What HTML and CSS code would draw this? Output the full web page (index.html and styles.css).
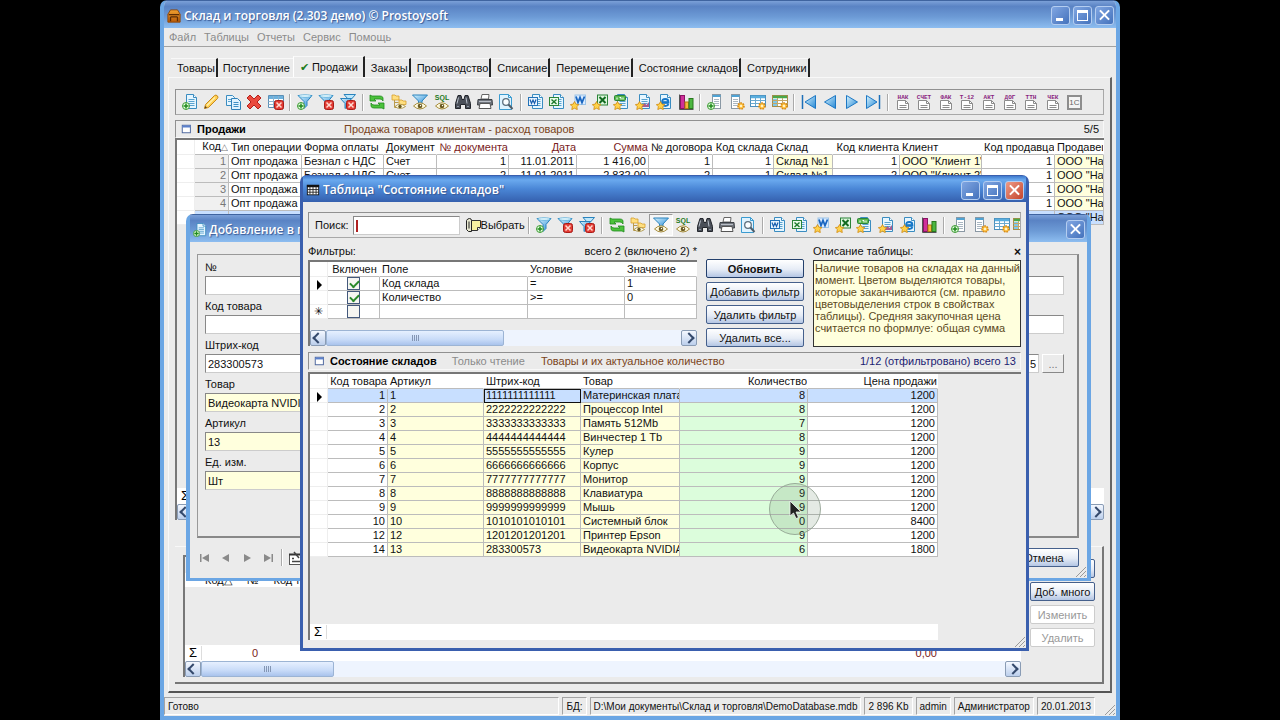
FILE: index.html
```html
<!DOCTYPE html>
<html lang="ru">
<head>
    <meta charset="UTF-8">
    <title>Склад и торговля</title>
    <link rel="stylesheet" href="styles.css">
</head>
<body>
    <!-- Icon set -->
    <svg class="sprite" aria-hidden="true">
        <defs>
            <linearGradient id="g-blue" x1="0" y1="0" x2="1" y2="1">
                <stop offset="0" stop-color="#d8f4ff"/>
                <stop offset="1" stop-color="#2487d4"/>
            </linearGradient>
            <linearGradient id="g-box" x1="0" y1="0" x2="0" y2="1">
                <stop offset="0" stop-color="#f0a030"/>
                <stop offset="1" stop-color="#b85a08"/>
            </linearGradient>
        </defs>
        <symbol id="p-page" viewBox="0 0 16 16">
            <path d="M4.500 .5h7l3 3v11h-10z" fill="#e6f6ff" stroke="#3a8cc0"/>
            <path d="M11.500 .5v3h3" fill="#fff" stroke="#3a8cc0"/>
            <path d="M6.500 5.500h6M6.500 7.500h6M6.500 9.500h6M6.500 11.500h6" stroke="#5ba3cf"/>
        </symbol>
        <symbol id="p-plus" viewBox="0 0 16 16">
            <circle cx="4" cy="12" r="3.500" fill="#e9ffe4" stroke="#3a9a30"/>
            <path d="M4 9.500v5M1.500 12h5" stroke="#1f8a1c" stroke-width="1.500"/>
        </symbol>
        <symbol id="p-cross" viewBox="0 0 16 16">
            <rect x="6.500" y="6.500" width="9" height="9" rx="2" fill="#e23c34" stroke="#a81c18"/>
            <path d="M8.500 8.500l5 5M13.500 8.500l-5 5" stroke="#ffd8d0" stroke-width="1.500"/>
        </symbol>
        <symbol id="p-star" viewBox="0 0 16 16">
            <path d="M4.500 7.500l1.400 2.600 3 .5-2.100 2 .5 3-2.800-1.400-2.700 1.400.5-3-2-2 2.900-.5z" fill="#ffd24a" stroke="#d08a10" stroke-width=".8"/>
        </symbol>
        <symbol id="p-gear" viewBox="0 0 16 16">
            <circle cx="12" cy="12" r="3" fill="#ffc240" stroke="#d68a18" stroke-width="1.600" stroke-dasharray="1.600 1"/>
            <circle cx="12" cy="12" r="1.200" fill="#fff3cc"/>
        </symbol>
        <symbol id="p-funnel" viewBox="0 0 16 16">
            <path d="M1 1.500h14l-5 6v4l-3 3v-7z" fill="url(#g-blue)" stroke="#2a83bd"/>
            <ellipse cx="8" cy="2" rx="6.500" ry="1.300" fill="#e8fbff" stroke="#4aa5d6" stroke-width=".7"/>
        </symbol>
        <symbol id="p-eye" viewBox="0 0 16 16">
            <path d="M1.500 12q6.500-6.500 13 0q-6.500 6-13 0z" fill="#fffbe0" stroke="#a58b3c"/>
            <circle cx="8" cy="12" r="2.300" fill="#6b5a20"/>
            <circle cx="8.500" cy="11.500" r=".7" fill="#fff"/>
        </symbol>
        <symbol id="i-add" viewBox="0 0 16 16"><use href="#p-page"/><use href="#p-plus"/></symbol>
        <symbol id="i-edit" viewBox="0 0 16 16">
            <path d="M1.500 14.500l1-4 9-9q1.500-1 2.800.3t.2 2.700l-9 9z" fill="#ffcf52" stroke="#c88a1c"/>
            <path d="M4 11.500l8-8" stroke="#fff0ae" stroke-width="1.500"/>
            <path d="M1.500 14.500l.7-2.500 1.800 1.800z" fill="#5b4320"/>
        </symbol>
        <symbol id="i-copy" viewBox="0 0 16 16">
            <path d="M1.500 1.500h6l2 2v8h-8z" fill="#e6f6ff" stroke="#3a8cc0"/>
            <path d="M3 5.500h4M3 7.500h3" stroke="#5ba3cf"/>
            <path d="M6.500 4.500h6l3 3v8h-9z" fill="#dff3ff" stroke="#2f80b8"/>
            <path d="M8.500 8.500h5M8.500 10.500h5M8.500 12.500h5" stroke="#3e90c6"/>
        </symbol>
        <symbol id="i-delete" viewBox="0 0 16 16">
            <path d="M4 1l4 4 4-4 3 3-4 4 4 4-3 3-4-4-4 4-3-3 4-4-4-4z" fill="#ea4a3e" stroke="#b5201a"/>
        </symbol>
        <symbol id="i-tabledel" viewBox="0 0 16 16">
            <path d="M.5 1.500h15v12h-15z" fill="#fff" stroke="#5b8fb5"/>
            <path d="M1 2h14v3H1z" fill="#6eb2de"/>
            <path d="M.5 7.500h15M.5 10.500h15M5.500 2v11M10.500 2v11" stroke="#8db3cf"/>
            <use href="#p-cross"/>
        </symbol>
        <symbol id="i-filteradd" viewBox="0 0 16 16"><use href="#p-funnel"/><use href="#p-plus"/></symbol>
        <symbol id="i-filterdel" viewBox="0 0 16 16"><use href="#p-funnel"/><use href="#p-cross"/></symbol>
        <symbol id="i-filterclear" viewBox="0 0 16 16">
            <path d="M4 .5h11.500l-4 4.500H8z" fill="#bfe8fb" stroke="#2a83bd"/>
            <path d="M.5 4.500h11l-4 5v3l-2.500 2v-5z" fill="url(#g-blue)" stroke="#2a83bd"/>
            <use href="#p-cross"/>
        </symbol>
        <symbol id="i-refresh" viewBox="0 0 16 16">
            <path d="M1 1v6h6L5 5h6q2 0 3 2V3.500Q13 2 11 2H3z" fill="#4cc23c" stroke="#1f8a1c" stroke-width=".8"/>
            <path d="M15 15V9H9l2 2H5q-2 0-3-2v3.500Q3 14 5 14h8z" fill="#4cc23c" stroke="#1f8a1c" stroke-width=".8"/>
        </symbol>
        <symbol id="i-tree" viewBox="0 0 16 16">
            <path d="M3.500 5v8.500h4M3.500 8.500h4" fill="none" stroke="#b99a4c"/>
            <path d="M1 1h3l1 1h3v4H1zM8 6h3l1 1h3v3.500H8z" fill="#ffdf80" stroke="#d6a02c" stroke-width=".8"/>
            <path d="M4 12.500q5-4.500 10.500 0q-5.500 4-10.500 0z" fill="#fffbe0" stroke="#a58b3c" stroke-width=".8"/>
            <circle cx="9" cy="12.500" r="1.700" fill="#6b5a20"/>
        </symbol>
        <symbol id="i-filtereye" viewBox="0 0 16 16">
            <path d="M.5 1h15l-5.500 6v3H6.500V7z" fill="url(#g-blue)" stroke="#2a83bd"/>
            <use href="#p-eye"/>
        </symbol>
        <symbol id="i-sql" viewBox="0 0 16 16">
            <use href="#p-eye"/>
            <text x="8" y="6" text-anchor="middle" class="sql-text">SQL</text>
        </symbol>
        <symbol id="i-find" viewBox="0 0 16 16">
            <path d="M3 1.500h3l1 4h2l1-4h3l2.500 8v5h-5v-4h-5v4h-5v-5z" fill="#4a4f58" stroke="#23262c"/>
            <path d="M3.500 3.500l-1.500 6M11 3.500l1 6" stroke="#b8bfca"/>
            <path d="M2 12.500h2M12 12.500h2" stroke="#8d96a3"/>
        </symbol>
        <symbol id="i-print" viewBox="0 0 16 16">
            <path d="M4 5l1-4.500h7L11.500 5z" fill="#fff" stroke="#666"/>
            <path d="M1 5.500h14l.5 5.500h-15z" fill="#70757d" stroke="#3c4046"/>
            <path d="M3 9.500h10l1 5H2z" fill="#fdfdfd" stroke="#555"/>
            <path d="M2 7.500h12" stroke="#b9bec6"/>
        </symbol>
        <symbol id="i-preview" viewBox="0 0 16 16">
            <path d="M1.500 .5h9l3 3v12h-12z" fill="#dff3ff" stroke="#3a9bd0"/>
            <path d="M10.500 .5v3h3" fill="none" stroke="#3a9bd0"/>
            <circle cx="8" cy="8" r="3.300" fill="#fafdff" stroke="#5c6f7e" stroke-width="1.300"/>
            <path d="M10.500 10.500l4 4.500" stroke="#4f5d69" stroke-width="2"/>
        </symbol>
        <symbol id="i-word" viewBox="0 0 16 16">
            <use href="#p-page"/>
            <rect x=".5" y="3.500" width="9" height="8" fill="#e8f4ff" stroke="#2272b8"/>
            <path d="M2 5.500l1.500 4 1.500-3.500 1.500 3.500L8 5.500" fill="none" stroke="#1a5fae" stroke-width="1.200"/>
        </symbol>
        <symbol id="i-excel" viewBox="0 0 16 16">
            <use href="#p-page"/>
            <rect x=".5" y="3.500" width="9" height="8" fill="#e8fbe8" stroke="#2b8438"/>
            <path d="M2.500 5.500l5 4.500M7.500 5.500l-5 4.500" stroke="#1d7a2c" stroke-width="1.400"/>
        </symbol>
        <symbol id="i-wordstar" viewBox="0 0 16 16">
            <rect x="5" y="1" width="10.500" height="9.500" fill="#d9ebff" stroke="#9cc4e8"/>
            <path d="M6 2.500l2 6 2-5 2 5 2.500-6" fill="none" stroke="#1a66c0" stroke-width="1.800"/>
            <use href="#p-star"/>
        </symbol>
        <symbol id="i-excelstar" viewBox="0 0 16 16">
            <rect x="5.500" y="1" width="10" height="10" fill="#dff7df" stroke="#2b8438"/>
            <path d="M7.500 3l6 6M13.500 3l-6 6" stroke="#126a20" stroke-width="2"/>
            <use href="#p-star"/>
        </symbol>
        <symbol id="i-csvstar" viewBox="0 0 16 16">
            <use href="#p-page"/>
            <rect x="1.500" y="1.500" width="11" height="5" rx="1" fill="#58b84c" stroke="#2b8438"/>
            <path d="M4 3.500v2M6.500 3.500h1.500v2M10 3.500v2" stroke="#fff" fill="none"/>
            <use href="#p-star"/>
        </symbol>
        <symbol id="i-imgstar" viewBox="0 0 16 16">
            <use href="#p-page"/>
            <path d="M7 12l2.500-3 2 2 2.500-3v5H7z" fill="#a85c90"/>
            <use href="#p-star"/>
        </symbol>
        <symbol id="i-iestar" viewBox="0 0 16 16">
            <use href="#p-page"/>
            <path d="M12.500 10q-1 2-3.200 2Q6 12 6 8.500T9.300 5q3.200 0 3.200 3.500H6" fill="none" stroke="#1677c8" stroke-width="1.800"/>
            <use href="#p-star"/>
        </symbol>
        <symbol id="i-chart" viewBox="0 0 16 16">
            <path d="M1.500 .5v15h14" fill="none" stroke="#555"/>
            <rect x="2.500" y="1.500" width="4" height="13" fill="#d0309a" stroke="#8a1464"/>
            <rect x="7" y="8" width="3.500" height="6.500" fill="#f5b83a" stroke="#b67a10"/>
            <rect x="11" y="4.500" width="4" height="10" fill="#4cb640" stroke="#28781e"/>
        </symbol>
        <symbol id="p-column" viewBox="0 0 16 16">
            <rect x="5.500" y=".5" width="8" height="14" fill="#fff" stroke="#8a98a4"/>
            <path d="M5.500 2h8" stroke="#4fa3d4" stroke-width="2"/>
            <path d="M7 5.500h5M7 7.500h5M7 9.500h5M7 11.500h5" stroke="#a9b7c2"/>
        </symbol>
        <symbol id="i-coladd" viewBox="0 0 16 16"><use href="#p-column"/><use href="#p-plus"/></symbol>
        <symbol id="i-colset" viewBox="0 0 16 16"><use href="#p-column" x="-3"/><use href="#p-gear"/></symbol>
        <symbol id="i-gridset" viewBox="0 0 16 16">
            <rect x=".5" y="1.500" width="15" height="11" fill="#fff" stroke="#4b8fbd"/>
            <path d="M1 3h14" stroke="#5aaede" stroke-width="2.500"/>
            <path d="M.5 6.500h15M.5 9.500h15M5.500 4v8M10.500 4v8" stroke="#6ba9cf"/>
            <use href="#p-gear"/>
        </symbol>
        <symbol id="i-gridcol" viewBox="0 0 16 16">
            <rect x=".5" y="1.500" width="15" height="11" fill="#fff" stroke="#a88c48"/>
            <path d="M1 3h14" stroke="#4aa84a" stroke-width="2.500"/>
            <path d="M1 5h4v7H1z" fill="#7fc8ea"/>
            <path d="M.5 6.500h15M.5 9.500h15M5.500 4v8M10.500 4v8" stroke="#c4a868"/>
            <use href="#p-gear"/>
        </symbol>
        <symbol id="i-first" viewBox="0 0 16 16"><path d="M1.500 1v14" stroke="#1d6fb8" stroke-width="1.500"/><path d="M14.500 1.500v13L4 8z" fill="url(#g-blue)" stroke="#1d78c4"/></symbol>
        <symbol id="i-prev" viewBox="0 0 16 16"><path d="M13.500 1.500v13L2.500 8z" fill="url(#g-blue)" stroke="#1d78c4"/></symbol>
        <symbol id="i-next" viewBox="0 0 16 16"><path d="M2.500 1.500v13L13.500 8z" fill="url(#g-blue)" stroke="#1d78c4"/></symbol>
        <symbol id="i-last" viewBox="0 0 16 16"><path d="M14.500 1v14" stroke="#1d6fb8" stroke-width="1.500"/><path d="M1.500 1.500v13L12 8z" fill="url(#g-blue)" stroke="#1d78c4"/></symbol>
        <symbol id="p-form" viewBox="0 0 16 16">
            <path d="M2.500 6.500h8l3 3v6h-11z" fill="#fff" stroke="#8b8b8b"/>
            <path d="M10.500 6.500v3h3M4.500 11.500h7M4.500 13.500h7" fill="none" stroke="#8b8b8b"/>
        </symbol>
        <symbol id="i-box" viewBox="0 0 16 16">
            <path d="M1 6l3-5h8l3 5v9H1z" fill="url(#g-box)" stroke="#8c4406"/>
            <path d="M2 6.500h12M4 9h8M4 9v5M12 9v5" stroke="#5c2c04" stroke-width="1.500"/>
        </symbol>
        <symbol id="i-sheet" viewBox="0 0 16 16">
            <rect x="1.500" y="2.500" width="13" height="11" fill="#fff" stroke="#111"/>
            <path d="M1 3.500h14" stroke="#111" stroke-width="2.500"/>
            <path d="M1.500 7.500h13M1.500 10.500h13M4.500 4v9M8 4v9M11.500 4v9" stroke="#222"/>
        </symbol>
        <symbol id="i-form" viewBox="0 0 16 16">
            <rect x="2" y="2" width="13" height="12" fill="#fff" stroke="#49639c" stroke-width="1.500"/>
            <path d="M2 4h13" stroke="#5a80cc" stroke-width="3"/>
        </symbol>
        <symbol id="i-choose" viewBox="0 0 16 16">
            <path d="M5.500 3.500h10v7l-3 3h-7z" fill="#f7f0a0" stroke="#333"/>
            <path d="M12.500 13.500v-3h3" fill="#fff" stroke="#333"/>
            <path d="M1.500 3.500v9l2 2h3v-11q0-2-2-2t-3 2zM4 4.500v7" fill="#e9e9d0" stroke="#222"/>
        </symbol>
        <symbol id="i-props" viewBox="0 0 16 16">
            <rect x="1.500" y="4.500" width="13" height="10" fill="#fff" stroke="#555"/>
            <path d="M1 4.500h14" stroke="#333" stroke-width="2"/>
            <path d="M6 2l5 6M4 8.500h2M4 11.500h8" stroke="#444" stroke-width="1.500"/>
        </symbol>
        <symbol id="i-grip" viewBox="0 0 12 12">
            <path d="M1 11L11 1M5 11l6-6M9 11l2-2" stroke="#9a9a9a"/>
        </symbol>
    </svg>

    <div class="window app">
        <header class="titlebar">
            <svg class="icon"><use href="#i-box"/></svg>
            <h1 class="title">Склад и торговля (2.303 демо) © Prostoysoft</h1>
            <button class="winbtn min" aria-label="Свернуть"></button>
            <button class="winbtn max" aria-label="Развернуть"></button>
            <button class="winbtn close" aria-label="Закрыть"></button>
        </header>

        <nav class="menu">
            <button>Файл</button>
            <button>Таблицы</button>
            <button>Отчеты</button>
            <button>Сервис</button>
            <button>Помощь</button>
        </nav>

        <div class="workspace">
            <div class="tabs">
                <button class="tab">Товары</button>
                <button class="tab">Поступление</button>
                <button class="tab active"><span class="tick">✔</span> Продажи</button>
                <button class="tab">Заказы</button>
                <button class="tab">Производство</button>
                <button class="tab">Списание</button>
                <button class="tab">Перемещение</button>
                <button class="tab">Состояние складов</button>
                <button class="tab">Сотрудники</button>
            </div>

            <main class="page">
                <div class="toolbar main-tools">
                    <button class="tool" aria-label="Добавить"><svg class="icon"><use href="#i-add"/></svg></button>
                    <button class="tool" aria-label="Изменить"><svg class="icon"><use href="#i-edit"/></svg></button>
                    <button class="tool" aria-label="Копировать"><svg class="icon"><use href="#i-copy"/></svg></button>
                    <button class="tool" aria-label="Удалить"><svg class="icon"><use href="#i-delete"/></svg></button>
                    <button class="tool" aria-label="Очистить"><svg class="icon"><use href="#i-tabledel"/></svg></button>
                    <span class="sep"></span>
                    <button class="tool" aria-label="Добавить фильтр"><svg class="icon"><use href="#i-filteradd"/></svg></button>
                    <button class="tool" aria-label="Удалить фильтр"><svg class="icon"><use href="#i-filterdel"/></svg></button>
                    <button class="tool" aria-label="Удалить все фильтры"><svg class="icon"><use href="#i-filterclear"/></svg></button>
                    <span class="sep"></span>
                    <button class="tool" aria-label="Обновить"><svg class="icon"><use href="#i-refresh"/></svg></button>
                    <button class="tool" aria-label="Дерево"><svg class="icon"><use href="#i-tree"/></svg></button>
                    <button class="tool" aria-label="Фильтры"><svg class="icon"><use href="#i-filtereye"/></svg></button>
                    <button class="tool" aria-label="Запрос"><svg class="icon"><use href="#i-sql"/></svg></button>
                    <button class="tool" aria-label="Найти"><svg class="icon"><use href="#i-find"/></svg></button>
                    <button class="tool" aria-label="Печать"><svg class="icon"><use href="#i-print"/></svg></button>
                    <button class="tool" aria-label="Просмотр"><svg class="icon"><use href="#i-preview"/></svg></button>
                    <span class="sep"></span>
                    <button class="tool" aria-label="Word"><svg class="icon"><use href="#i-word"/></svg></button>
                    <button class="tool" aria-label="Excel"><svg class="icon"><use href="#i-excel"/></svg></button>
                    <button class="tool" aria-label="Шаблон Word"><svg class="icon"><use href="#i-wordstar"/></svg></button>
                    <button class="tool" aria-label="Шаблон Excel"><svg class="icon"><use href="#i-excelstar"/></svg></button>
                    <button class="tool" aria-label="CSV"><svg class="icon"><use href="#i-csvstar"/></svg></button>
                    <button class="tool" aria-label="Текст"><svg class="icon"><use href="#i-imgstar"/></svg></button>
                    <button class="tool" aria-label="HTML"><svg class="icon"><use href="#i-iestar"/></svg></button>
                    <button class="tool" aria-label="Диаграмма"><svg class="icon"><use href="#i-chart"/></svg></button>
                    <span class="sep"></span>
                    <button class="tool" aria-label="Добавить поле"><svg class="icon"><use href="#i-coladd"/></svg></button>
                    <button class="tool" aria-label="Свойства поля"><svg class="icon"><use href="#i-colset"/></svg></button>
                    <button class="tool" aria-label="Свойства таблицы"><svg class="icon"><use href="#i-gridset"/></svg></button>
                    <button class="tool" aria-label="Цвета"><svg class="icon"><use href="#i-gridcol"/></svg></button>
                    <span class="sep"></span>
                    <button class="tool" aria-label="Первая"><svg class="icon"><use href="#i-first"/></svg></button>
                    <button class="tool" aria-label="Предыдущая"><svg class="icon"><use href="#i-prev"/></svg></button>
                    <button class="tool" aria-label="Следующая"><svg class="icon"><use href="#i-next"/></svg></button>
                    <button class="tool" aria-label="Последняя"><svg class="icon"><use href="#i-last"/></svg></button>
                    <span class="sep"></span>
                    <button class="tool"><svg class="icon" viewBox="0 0 16 16"><use href="#p-form"/><text x="8" y="5" class="form-text">НАК</text></svg></button>
                    <button class="tool"><svg class="icon" viewBox="0 0 16 16"><use href="#p-form"/><text x="8" y="5" class="form-text">СЧЕТ</text></svg></button>
                    <button class="tool"><svg class="icon" viewBox="0 0 16 16"><use href="#p-form"/><text x="8" y="5" class="form-text">ФАК</text></svg></button>
                    <button class="tool"><svg class="icon" viewBox="0 0 16 16"><use href="#p-form"/><text x="8" y="5" class="form-text">Т-12</text></svg></button>
                    <button class="tool"><svg class="icon" viewBox="0 0 16 16"><use href="#p-form"/><text x="8" y="5" class="form-text">АКТ</text></svg></button>
                    <button class="tool"><svg class="icon" viewBox="0 0 16 16"><use href="#p-form"/><text x="8" y="5" class="form-text">ДОГ</text></svg></button>
                    <button class="tool"><svg class="icon" viewBox="0 0 16 16"><use href="#p-form"/><text x="8" y="5" class="form-text">ТТН</text></svg></button>
                    <button class="tool"><svg class="icon" viewBox="0 0 16 16"><use href="#p-form"/><text x="8" y="5" class="form-text">ЧЕК</text></svg></button>
                    <button class="tool"><span class="one-c">1С</span></button>
                </div>

                <div class="caption">
                    <svg class="icon small"><use href="#i-form"/></svg>
                    <h2 class="sales-name">Продажи</h2>
                    <span class="note">Продажа товаров клиентам - расход товаров</span>
                    <span class="count">5/5</span>
                </div>

                <section class="grid sales">
                    <table>
                        <colgroup>
                            <col class="w18"><col class="w34"><col class="w73"><col class="w82"><col class="w53">
                            <col class="w72"><col class="w68"><col class="w72"><col class="w64"><col class="w61">
                            <col class="w59"><col class="w67"><col class="w82"><col class="w73"><col>
                        </colgroup>
                        <thead>
                            <tr><th></th><th class="num">Код<span class="sort">△</span></th><th>Тип операции</th><th>Форма оплаты</th><th>Документ</th><th class="num brown">№ документа</th><th class="num brown">Дата</th><th class="num brown">Сумма</th><th class="num">№ договора</th><th class="num">Код склада</th><th>Склад</th><th class="num">Код клиента</th><th>Клиент</th><th class="num">Код продавца</th><th>Продавец</th></tr>
                        </thead>
                        <tbody>
                            <tr><td></td><td class="num key">1</td><td>Опт продажа</td><td>Безнал с НДС</td><td>Счет</td><td class="num">1</td><td class="num">11.01.2011</td><td class="num">1 416,00</td><td class="num">1</td><td class="num">1</td><td class="ref">Склад №1</td><td class="num">1</td><td class="ref">ООО "Клиент 1"</td><td class="num">1</td><td class="ref">ООО "Наша"</td></tr>
                            <tr><td></td><td class="num key">2</td><td>Опт продажа</td><td>Безнал с НДС</td><td>Счет</td><td class="num">2</td><td class="num">11.01.2011</td><td class="num">2 832,00</td><td class="num">2</td><td class="num">1</td><td class="ref">Склад №1</td><td class="num">2</td><td class="ref">ООО "Клиент 2"</td><td class="num">1</td><td class="ref">ООО "Наша"</td></tr>
                            <tr><td></td><td class="num key">3</td><td>Опт продажа</td><td></td><td></td><td></td><td></td><td></td><td></td><td></td><td></td><td></td><td></td><td class="num">1</td><td class="ref">ООО "Наша"</td></tr>
                            <tr><td></td><td class="num key">4</td><td>Опт продажа</td><td></td><td></td><td></td><td></td><td></td><td></td><td></td><td></td><td></td><td></td><td class="num">1</td><td class="ref">ООО "Наша"</td></tr>
                            <tr class="selected"><td></td><td></td><td></td><td></td><td></td><td></td><td></td><td></td><td></td><td></td><td></td><td></td><td></td><td></td><td>ООО "Наша"</td></tr>
                        </tbody>
                    </table>
                    <div class="totals"><span class="sigma">Σ</span></div>
                    <div class="scrollbar">
                        <button class="arrow left" aria-label="Влево"></button>
                        <span class="thumb"></span>
                        <button class="arrow right" aria-label="Вправо"></button>
                    </div>
                </section>

                <section class="details">
                    <div class="grid lines">
                        <div class="lines-head"><span>Код△</span><span>№</span><span>Код товара</span></div>
                        <div class="totals"><span class="sigma">Σ</span><span class="total-count">0</span><span class="total-sum">0,00</span></div>
                        <div class="scrollbar">
                            <button class="arrow left" aria-label="Влево"></button>
                            <span class="thumb"></span>
                            <button class="arrow right" aria-label="Вправо"></button>
                        </div>
                    </div>
                    <div class="side-buttons">
                        <button class="btn" aria-label="Добавить"></button>
                        <button class="btn">Доб. много</button>
                        <button class="btn" disabled>Изменить</button>
                        <button class="btn" disabled>Удалить</button>
                    </div>
                </section>
            </main>
        </div>

        <footer class="status">
            <span class="cell ready">Готово</span>
            <span class="cell">БД:</span>
            <span class="cell">D:\Мои документы\Склад и торговля\DemoDatabase.mdb</span>
            <span class="cell">2 896 Kb</span>
            <span class="cell">admin</span>
            <span class="cell">Администратор</span>
            <span class="cell">20.01.2013</span>
            <svg class="grip"><use href="#i-grip"/></svg>
        </footer>

        <!-- Add record dialog -->
        <div class="window dialog add-dialog">
            <header class="titlebar">
                <svg class="icon"><use href="#i-add"/></svg>
                <h2 class="title">Добавление в п</h2>
                <button class="winbtn close" aria-label="Закрыть"></button>
            </header>
            <div class="add-body">
                <form class="fields">
                    <label for="f-num">№</label>
                    <div class="field-row"><input id="f-num" type="text"></div>
                    <label for="f-code">Код товара</label>
                    <div class="field-row"><input id="f-code" type="text"></div>
                    <label for="f-bar">Штрих-код</label>
                    <div class="field-row">
                        <input id="f-bar" type="text" value="283300573">
                        <input class="tail" type="text" value="5" aria-label="Количество">
                        <button type="button" class="dots">...</button>
                    </div>
                    <label for="f-name">Товар</label>
                    <div class="field-row"><input id="f-name" class="ref half" type="text" value="Видеокарта NVIDIA"></div>
                    <label for="f-art">Артикул</label>
                    <div class="field-row"><input id="f-art" class="ref half" type="text" value="13"></div>
                    <label for="f-unit">Ед. изм.</label>
                    <div class="field-row"><input id="f-unit" class="ref half" type="text" value="Шт"></div>
                </form>
                <div class="add-footer">
                    <button class="nav" aria-label="Первая"><svg viewBox="0 0 12 10"><path d="M1 1h1.500v8H1zM10 1v8L3 5z"/></svg></button>
                    <button class="nav" aria-label="Предыдущая"><svg viewBox="0 0 12 10"><path d="M9 1v8L2 5z"/></svg></button>
                    <button class="nav" aria-label="Следующая"><svg viewBox="0 0 12 10"><path d="M3 1v8l7-4z"/></svg></button>
                    <button class="nav" aria-label="Последняя"><svg viewBox="0 0 12 10"><path d="M2 1v8l7-4zM9.500 1H11v8H9.500z"/></svg></button>
                    <span class="sep"></span>
                    <svg class="icon"><use href="#i-props"/></svg>
                    <button class="btn cancel">Отмена</button>
                </div>
            </div>
            <svg class="grip"><use href="#i-grip"/></svg>
        </div>

        <!-- Stock table -->
        <div class="window dialog stock-dialog">
            <header class="titlebar">
                <svg class="icon"><use href="#i-sheet"/></svg>
                <h2 class="title">Таблица "Состояние складов"</h2>
                <button class="winbtn min" aria-label="Свернуть"></button>
                <button class="winbtn max" aria-label="Развернуть"></button>
                <button class="winbtn close" aria-label="Закрыть"></button>
            </header>
            <div class="stock-body">
                <div class="toolbar">
                    <label class="search-label" for="search">Поиск:</label>
                    <div class="search"><input id="search" type="text"><span class="caret"></span></div>
                    <button class="choose"><svg class="icon"><use href="#i-choose"/></svg>Выбрать</button>
                    <span class="sep"></span>
                    <button class="tool" aria-label="Добавить фильтр"><svg class="icon"><use href="#i-filteradd"/></svg></button>
                    <button class="tool" aria-label="Удалить фильтр"><svg class="icon"><use href="#i-filterdel"/></svg></button>
                    <button class="tool" aria-label="Удалить все фильтры"><svg class="icon"><use href="#i-filterclear"/></svg></button>
                    <span class="sep"></span>
                    <button class="tool" aria-label="Обновить"><svg class="icon"><use href="#i-refresh"/></svg></button>
                    <button class="tool" aria-label="Дерево"><svg class="icon"><use href="#i-tree"/></svg></button>
                    <button class="tool pressed" aria-label="Фильтры"><svg class="icon"><use href="#i-filtereye"/></svg></button>
                    <button class="tool" aria-label="Запрос"><svg class="icon"><use href="#i-sql"/></svg></button>
                    <button class="tool" aria-label="Найти"><svg class="icon"><use href="#i-find"/></svg></button>
                    <button class="tool" aria-label="Печать"><svg class="icon"><use href="#i-print"/></svg></button>
                    <button class="tool" aria-label="Просмотр"><svg class="icon"><use href="#i-preview"/></svg></button>
                    <span class="sep"></span>
                    <button class="tool" aria-label="Word"><svg class="icon"><use href="#i-word"/></svg></button>
                    <button class="tool" aria-label="Excel"><svg class="icon"><use href="#i-excel"/></svg></button>
                    <button class="tool" aria-label="Шаблон Word"><svg class="icon"><use href="#i-wordstar"/></svg></button>
                    <button class="tool" aria-label="Шаблон Excel"><svg class="icon"><use href="#i-excelstar"/></svg></button>
                    <button class="tool" aria-label="CSV"><svg class="icon"><use href="#i-csvstar"/></svg></button>
                    <button class="tool" aria-label="Текст"><svg class="icon"><use href="#i-imgstar"/></svg></button>
                    <button class="tool" aria-label="HTML"><svg class="icon"><use href="#i-iestar"/></svg></button>
                    <button class="tool" aria-label="Диаграмма"><svg class="icon"><use href="#i-chart"/></svg></button>
                    <span class="sep"></span>
                    <button class="tool" aria-label="Добавить поле"><svg class="icon"><use href="#i-coladd"/></svg></button>
                    <button class="tool" aria-label="Свойства поля"><svg class="icon"><use href="#i-colset"/></svg></button>
                    <button class="tool" aria-label="Свойства таблицы"><svg class="icon"><use href="#i-gridset"/></svg></button>
                    <button class="tool cut" aria-label="Цвета"><svg class="icon"><use href="#i-gridcol"/></svg></button>
                </div>

                <div class="filter-area">
                    <div class="filters">
                        <div class="label-row"><span>Фильтры:</span><span>всего 2 (включено 2) *</span></div>
                        <div class="grid filter-grid">
                            <table>
                                <colgroup><col class="w18"><col class="w52"><col class="w148"><col class="w97"><col></colgroup>
                                <thead>
                                    <tr><th></th><th class="mid">Включен</th><th>Поле</th><th>Условие</th><th>Значение</th></tr>
                                </thead>
                                <tbody>
                                    <tr><td class="mark"><span class="pointer"></span></td><td class="mid"><input type="checkbox" aria-label="Код склада" checked></td><td>Код склада</td><td>=</td><td>1</td></tr>
                                    <tr><td></td><td class="mid"><input type="checkbox" aria-label="Количество" checked></td><td>Количество</td><td>&gt;=</td><td>0</td></tr>
                                    <tr><td class="mark">✳</td><td class="mid"><input type="checkbox" aria-label="Новый фильтр"></td><td></td><td></td><td></td></tr>
                                </tbody>
                            </table>
                            <div class="scrollbar">
                                <button class="arrow left" aria-label="Влево"></button>
                                <span class="thumb"></span>
                                <button class="arrow right" aria-label="Вправо"></button>
                            </div>
                        </div>
                    </div>
                    <div class="filter-buttons">
                        <button class="btn default">Обновить</button>
                        <button class="btn">Добавить фильтр</button>
                        <button class="btn">Удалить фильтр</button>
                        <button class="btn">Удалить все...</button>
                    </div>
                    <div class="about">
                        <div class="label-row"><span>Описание таблицы:</span><button class="hide" aria-label="Скрыть">×</button></div>
                        <p class="about-text">Наличие товаров на складах на данный момент. Цветом выделяются товары, которые заканчиваются (см. правило цветовыделения строк в свойствах таблицы). Средняя закупочная цена считается по формлуе: общая сумма</p>
                    </div>
                </div>

                <div class="caption">
                    <svg class="icon small"><use href="#i-form"/></svg>
                    <h3>Состояние складов</h3>
                    <span class="readonly">Только чтение</span>
                    <span class="note">Товары и их актуальное количество</span>
                    <span class="count blue">1/12 (отфильтровано) всего 13</span>
                </div>

                <div class="grid stock-grid">
                    <table>
                        <colgroup><col class="w18"><col class="w60"><col class="w96"><col class="w97"><col class="w99"><col class="w128"><col class="w130"></colgroup>
                        <thead>
                            <tr><th></th><th class="num">Код товара</th><th>Артикул</th><th>Штрих-код</th><th>Товар</th><th class="num">Количество</th><th class="num">Цена продажи</th></tr>
                        </thead>
                        <tbody>
                            <tr class="selected"><td class="mark"><span class="pointer"></span></td><td class="num">1</td><td>1</td><td class="focus">1111111111111</td><td>Материнская плата</td><td class="num">8</td><td class="num">1200</td></tr>
                            <tr><td></td><td class="num">2</td><td class="ref">2</td><td class="ref">2222222222222</td><td class="ref">Процессор Intel</td><td class="num qty">8</td><td class="num">1200</td></tr>
                            <tr><td></td><td class="num">3</td><td class="ref">3</td><td class="ref">3333333333333</td><td class="ref">Память 512Mb</td><td class="num qty">7</td><td class="num">1200</td></tr>
                            <tr><td></td><td class="num">4</td><td class="ref">4</td><td class="ref">4444444444444</td><td class="ref">Винчестер 1 Tb</td><td class="num qty">8</td><td class="num">1200</td></tr>
                            <tr><td></td><td class="num">5</td><td class="ref">5</td><td class="ref">5555555555555</td><td class="ref">Кулер</td><td class="num qty">9</td><td class="num">1200</td></tr>
                            <tr><td></td><td class="num">6</td><td class="ref">6</td><td class="ref">6666666666666</td><td class="ref">Корпус</td><td class="num qty">9</td><td class="num">1200</td></tr>
                            <tr><td></td><td class="num">7</td><td class="ref">7</td><td class="ref">7777777777777</td><td class="ref">Монитор</td><td class="num qty">9</td><td class="num">1200</td></tr>
                            <tr><td></td><td class="num">8</td><td class="ref">8</td><td class="ref">8888888888888</td><td class="ref">Клавиатура</td><td class="num qty">9</td><td class="num">1200</td></tr>
                            <tr><td></td><td class="num">9</td><td class="ref">9</td><td class="ref">9999999999999</td><td class="ref">Мышь</td><td class="num qty">9</td><td class="num">1200</td></tr>
                            <tr><td></td><td class="num">10</td><td class="ref">10</td><td class="ref">1010101010101</td><td class="ref">Системный блок</td><td class="num qty">0</td><td class="num">8400</td></tr>
                            <tr><td></td><td class="num">12</td><td class="ref">12</td><td class="ref">1201201201201</td><td class="ref">Принтер Epson</td><td class="num qty">9</td><td class="num">1200</td></tr>
                            <tr><td></td><td class="num">14</td><td class="ref">13</td><td class="ref">283300573</td><td class="ref">Видеокарта NVIDIA</td><td class="num qty">6</td><td class="num">1800</td></tr>
                        </tbody>
                    </table>
                    <div class="totals"><span class="sigma">Σ</span></div>
                </div>
            </div>
            <svg class="grip"><use href="#i-grip"/></svg>
        </div>

        <svg class="cursor" viewBox="0 0 54 54">
            <circle cx="27" cy="27" r="25.500" fill="#5a7a5a" fill-opacity=".16" stroke="#8a9a8a" stroke-opacity=".8"/>
            <path d="M22 19v15l3.500-3 2.500 5.500 2.500-1-2.500-5.500h5z" fill="#222" stroke="#f4f4f4" stroke-width=".8"/>
        </svg>
    </div>
</body>
</html>
```

FILE: styles.css
```css
* {
    box-sizing: border-box;
}

body {
    margin: 0;
    background: #000;
    min-height: 100vh;
    display: flex;
    justify-content: center;
    font-family: "Liberation Sans", Arial, sans-serif;
    font-size: 11px;
    line-height: 14px;
    color: #111;
}

button,
input {
    font: inherit;
    color: inherit;
    margin: 0;
}

button {
    padding: 0;
    border: 0;
    background: none;
    white-space: nowrap;
}

h1, h2, h3, p {
    margin: 0;
    font-size: inherit;
}

.sprite {
    position: absolute;
    width: 0;
    height: 0;
}

.icon {
    width: 16px;
    height: 16px;
    flex: none;
}

.icon.small {
    width: 10px;
    height: 10px;
}

.sql-text {
    font: bold 7px "Liberation Sans", sans-serif;
    fill: #1f7a1c;
}

.form-text {
    font: bold 6px "Liberation Mono", monospace;
    fill: #8a1f80;
    text-anchor: middle;
}

.one-c {
    width: 15px;
    height: 15px;
    border: 2px solid #8d8d8d;
    background: #f4f4f4;
    color: #666;
    font-size: 8px;
    line-height: 11px;
}

/* Windows */
.window {
    display: flex;
    flex-direction: column;
    background: #ebebeb;
}

.app {
    position: relative;
    width: 75vw;
    height: 100vh;
    border: 4px solid #6ba6e4;
    border-top: 1px solid #3f64a0;
    border-radius: 7px 7px 0 0;
    overflow: hidden;
}

.titlebar {
    display: flex;
    align-items: center;
    gap: 3px;
    height: 27px;
    flex: none;
    padding: 2px 2px 0;
    background: linear-gradient(#7ba0d8, #5a83c4 20%, #6d9bd6 60%, #8dbdf0);
}

.title {
    flex: 1;
    color: #fff;
    font: 600 12px/16px "Open Sans", sans-serif;
    text-shadow: 1px 1px 1px #3a5a96;
    white-space: nowrap;
    overflow: hidden;
}

.titlebar .icon {
    width: 14px;
    height: 14px;
    margin-left: 1px;
}

.winbtn {
    position: relative;
    width: 19px;
    height: 19px;
    border: 1px solid #b4cdf0;
    border-radius: 3px;
    background: linear-gradient(135deg, #80a6e2, #4472bc);
}

.winbtn::before,
.winbtn::after {
    content: "";
    position: absolute;
}

.min::before {
    left: 4px;
    bottom: 3px;
    width: 7px;
    height: 3px;
    background: #fff;
}

.max::before {
    inset: 3px;
    border: 1px solid #fff;
    border-top-width: 3px;
}

.close::before,
.close::after {
    left: 2px;
    top: 7px;
    width: 13px;
    height: 2px;
    background: #fff;
    transform: rotate(45deg);
}

.close::after {
    transform: rotate(-45deg);
}

.menu {
    display: flex;
    gap: 8px;
    height: 19px;
    flex: none;
    padding: 0 5px;
    border-bottom: 1px solid #a2a2a2;
    color: #8c8c8c;
}

/* Tabs and page */
.workspace {
    flex: 1;
    min-height: 0;
    display: flex;
    flex-direction: column;
    padding: 9px 4px 3px 4px;
}

.tabs {
    display: flex;
    align-items: flex-end;
    height: 21px;
    flex: none;
    padding-left: 3px;
}

.tab {
    height: 19px;
    padding: 0 1px 0 6px;
    border-top: 1px solid #f8f8f8;
    border-right: 2px solid #222;
    line-height: 18px;
}

.tab.active {
    height: 21px;
    padding: 0 5px 1px 6px;
    border-left: 1px solid #fff;
}

.tab:nth-child(2) {
    border-right: 0;
    padding: 0 3px 0 5px;
}

.tick {
    color: #1d7d1d;
}

.page {
    flex: 1;
    min-height: 0;
    display: flex;
    flex-direction: column;
    padding: 11px 6px 7px 6px;
    border-top: 1px solid #f8f8f8;
    border-left: 1px solid #f8f8f8;
    border-right: 2px solid #666;
    border-bottom: 2px solid #555;
}

.toolbar {
    display: flex;
    align-items: center;
    height: 26px;
    flex: none;
    border: 1px solid #a8a8a8;
    border-top-color: #909090;
    border-left-color: #909090;
    overflow: hidden;
}

.main-tools {
    padding: 0 18px 0 3px;
}

.tool {
    flex: 1;
    height: 22px;
    min-width: 0;
    display: flex;
    align-items: center;
    justify-content: center;
}

.tool.pressed {
    border: 1px solid #999;
    border-right-color: #fff;
    border-bottom-color: #fff;
    background: #f6f6f6;
}

.tool.cut {
    flex: 0 0 7px;
    justify-content: flex-start;
    overflow: hidden;
}

.sep {
    flex: none;
    width: 2px;
    height: 17px;
    margin: 0 3px;
    border-left: 1px solid #aaa;
    border-right: 1px solid #fff;
}

.caption {
    display: flex;
    align-items: center;
    height: 18px;
    flex: none;
    padding: 0 4px 0 5px;
    border: 1px solid #909090;
    border-right-color: #f8f8f8;
    border-bottom-color: #f8f8f8;
    white-space: nowrap;
}

.caption h2,
.caption h3 {
    margin-left: 6px;
    color: #000;
}

.page > .caption {
    margin-top: 5px;
}

.sales-name {
    width: 147px;
}

.note {
    color: #7a4420;
}

.readonly {
    margin: 0 16px 0 15px;
    color: #8a8a8a;
}

.count {
    margin-left: auto;
}

.blue {
    color: #1c1c72;
}

.brown {
    color: #7a1c1c;
}

/* Grids */
.grid {
    display: flex;
    flex-direction: column;
    border-top: 2px solid #777;
    border-left: 2px solid #777;
    overflow: hidden;
}

table {
    width: 100%;
    table-layout: fixed;
    border-collapse: separate;
    border-spacing: 0;
    background: #fff;
    flex: none;
}

th,
td {
    height: 14px;
    padding: 0 2px;
    border-right: 1px solid #bcbcbc;
    border-bottom: 1px solid #bcbcbc;
    line-height: 13px;
    text-align: left;
    font-weight: normal;
    white-space: nowrap;
    overflow: hidden;
}

th {
    height: 15px;
    padding: 0 0 0 2px;
    border-right-color: #fff;
}

th:first-child,
td:first-child {
    border-color: #eee;
}

.num {
    text-align: right;
}

.mid {
    text-align: center;
}

.key {
    background: #f0f0f0;
    color: #777;
}

.ref {
    background: #ffffdd;
}

.qty {
    background: #dcfddc;
}

.selected td:not(:first-child) {
    background: #c8dfff;
}

.selected .focus {
    outline: 1px solid #111;
    outline-offset: -1px;
}

.mark {
    text-align: center;
    padding: 0;
}

.pointer {
    display: block;
    width: 5px;
    margin: 2px 0 0 7px;
    border: 5px solid transparent;
    border-left-color: #000;
    border-right: 0;
}

.sort {
    color: #777;
    font-size: 9px;
}

.w18 { width: 18px; }
.w34 { width: 34px; }
.w52 { width: 52px; }
.w53 { width: 53px; }
.w59 { width: 59px; }
.w60 { width: 60px; }
.w61 { width: 61px; }
.w64 { width: 64px; }
.w67 { width: 67px; }
.w68 { width: 68px; }
.w72 { width: 72px; }
.w73 { width: 73px; }
.w82 { width: 82px; }
.w96 { width: 96px; }
.w97 { width: 97px; }
.w99 { width: 99px; }
.w128 { width: 128px; }
.w130 { width: 130px; }
.w148 { width: 148px; }

.totals {
    display: flex;
    align-items: center;
    height: 16px;
    flex: none;
    margin-top: auto;
    background: #fff;
    color: #7a1c1c;
}

.sigma {
    width: 17px;
    border-right: 1px solid #ddd;
    color: #000;
    font-size: 13px;
    text-align: center;
}

.scrollbar {
    display: flex;
    height: 16px;
    flex: none;
    background: #eef4fe;
}

.arrow {
    display: flex;
    align-items: center;
    justify-content: center;
    width: 16px;
    border: 1px solid #8a9cb4;
    border-radius: 2px;
    background: linear-gradient(#f4f8ff, #bccfec);
}

.arrow::before {
    content: "";
    width: 6px;
    height: 6px;
    border: solid #34496c;
    border-width: 0 0 2px 2px;
    transform: rotate(45deg);
}

.arrow.right {
    margin-left: auto;
}

.arrow.right::before {
    transform: rotate(225deg);
}

.thumb {
    display: flex;
    align-items: center;
    justify-content: center;
    border: 1px solid #9cb4d4;
    border-radius: 2px;
    background: linear-gradient(#e6f0ff, #c8dbf8 60%, #a9c3ec);
}

.thumb::before {
    content: "";
    width: 7px;
    height: 6px;
    background: repeating-linear-gradient(90deg, #8496b4 0 1px, transparent 1px 2px);
}

.sales {
    flex: 1;
    min-height: 0;
}

.sales .thumb {
    width: 300px;
}

.details {
    display: flex;
    gap: 9px;
    flex: none;
    height: 138px;
    margin-top: 26px;
    padding: 8px 7px 5px 8px;
    border-top: 1px solid #f8f8f8;
    border-right: 2px solid #777;
    border-bottom: 2px solid #777;
}

.lines {
    flex: 1;
}

.lines-head {
    display: flex;
    gap: 15px;
    margin-top: 16px;
    padding-left: 20px;
    background: #fff;
}

.lines .thumb {
    width: 133px;
}

.total-count {
    width: 106px;
    text-align: center;
}

.total-sum {
    margin-left: auto;
    margin-right: 84px;
}

.side-buttons {
    display: flex;
    flex-direction: column;
    gap: 4px;
    width: 65px;
    padding-top: 4px;
}

.btn {
    height: 19px;
    flex: none;
    border: 1px solid #45608c;
    border-radius: 2px;
    background: linear-gradient(#fff, #e6ecf6 55%, #b4c6e4);
}

.btn:disabled {
    border-color: #ccc;
    background: #fff;
    color: #999;
}

/* Status bar */
.status {
    display: flex;
    align-items: flex-start;
    gap: 3px;
    height: 20px;
    flex: none;
    padding-top: 1px;
    font-size: 10px;
}

.cell {
    height: 18px;
    padding: 1px 3px;
    border: 1px solid #a4a4a4;
    border-right-color: #fff;
    border-bottom-color: #fff;
    line-height: 16px;
    white-space: nowrap;
}

.ready {
    flex: 1;
}

.grip {
    width: 12px;
    height: 12px;
}

.status .grip {
    align-self: flex-end;
    margin-left: 6px;
}

/* Dialogs */
.dialog {
    position: absolute;
}

.dialog > .grip {
    position: absolute;
    right: 0;
    bottom: 0;
}

.add-dialog {
    inset: 213px 25px 135px 22px;
    border: 4px solid #6ba6e4;
    border-top: 1px solid #3f64a0;
    border-bottom-width: 3px;
    border-radius: 7px 7px 0 0;
}

.add-dialog .titlebar {
    gap: 2px;
}

.add-body {
    flex: 1;
    min-height: 0;
    display: flex;
    flex-direction: column;
    padding: 12px 8px 11px 7px;
}

.fields {
    flex: 1;
    padding: 5px 13px 0 7px;
    border: 1px solid #999;
    border-right: 2px solid #888;
    border-bottom: 2px solid #888;
}

.fields label {
    display: block;
    height: 14px;
}

.field-row {
    display: flex;
    gap: 3px;
    margin: 2px 0 4px;
}

.fields input {
    flex: 1;
    min-width: 0;
    height: 19px;
    padding: 0 2px;
    border: 1px solid #888;
    border-right-color: #ccc;
    border-bottom-color: #ccc;
    background: #fff;
}

.fields input.ref {
    background: #ffffdd;
}

.fields input.half {
    flex: 0 0 50%;
}

.fields input.tail {
    text-align: right;
}

.dots {
    width: 22px;
    border: 1px solid #fff;
    border-right-color: #888;
    border-bottom-color: #888;
    color: #777;
}

.add-footer {
    display: flex;
    align-items: center;
    gap: 5px;
    margin-top: 10px;
}

.nav {
    width: 16px;
    height: 16px;
}

.nav svg {
    display: block;
    width: 12px;
    height: 10px;
    margin: 0 auto;
    fill: #8a8a8a;
}

.add-footer .sep {
    margin: 0;
}

.cancel {
    width: 70px;
    margin-left: auto;
}

.stock-dialog {
    inset: 174px 87px 65px 136px;
    border: 3px solid #3a5fae;
    border-top-width: 1px;
    border-radius: 7px 7px 0 0;
}

.stock-dialog .titlebar {
    height: 26px;
    background: linear-gradient(#3f79cc, #6aa9ee 15%, #4a86d6 50%, #3560ae);
}

.stock-dialog .close {
    background: linear-gradient(135deg, #ee9c88, #c4442c);
}

.stock-body {
    flex: 1;
    min-height: 0;
    display: flex;
    flex-direction: column;
    padding: 10px 5px 8px 5px;
}

.search-label {
    padding: 0 4px 0 6px;
}

.search {
    position: relative;
    display: flex;
    width: 107px;
}

.search input {
    width: 100%;
    height: 19px;
    border: 1px solid #888;
    border-right-color: #ccc;
    border-bottom-color: #ccc;
    background: #fff;
}

.caret {
    position: absolute;
    left: 3px;
    top: 4px;
    width: 2px;
    height: 12px;
    background: #b02020;
}

.choose {
    display: flex;
    align-items: center;
    margin-left: 5px;
}

.filter-area {
    display: flex;
    gap: 9px;
    margin-top: 6px;
}

.filters {
    flex: 1;
    display: flex;
    flex-direction: column;
}

.label-row {
    display: flex;
    justify-content: space-between;
    height: 16px;
}

.filter-grid {
    height: 86px;
}

.filter-grid .scrollbar {
    margin-top: auto;
}

.filter-grid .thumb {
    width: 178px;
}

input[type="checkbox"] {
    appearance: none;
    display: block;
    width: 13px;
    height: 13px;
    margin: 0 auto;
    border: 1px solid #44597c;
    background: #f6f6f2;
}

input[type="checkbox"]:checked::after {
    content: "";
    display: block;
    width: 7px;
    height: 4px;
    margin: 2px;
    border: solid #2a8a2a;
    border-width: 0 0 2px 2px;
    transform: rotate(-45deg);
}

.filter-buttons {
    display: flex;
    flex-direction: column;
    gap: 4px;
    width: 98px;
    padding-top: 15px;
}

.default {
    font-weight: bold;
    border-color: #24406c;
}

.about {
    width: 208px;
}

.hide {
    font-weight: bold;
    font-size: 12px;
}

.about-text {
    height: 87px;
    padding: 1px 0 0 1px;
    border: 1px solid #333;
    background: #ffffdd;
    color: #5c4a1c;
    line-height: 12px;
    overflow: hidden;
}

.stock-body > .caption {
    margin-top: 5px;
}

.stock-grid {
    flex: 1;
    min-height: 0;
    margin-top: 2px;
}

.stock-grid table,
.stock-grid .totals {
    width: 628px;
}

.cursor {
    position: absolute;
    left: 604px;
    top: 481px;
    width: 54px;
    height: 54px;
    pointer-events: none;
}
```
